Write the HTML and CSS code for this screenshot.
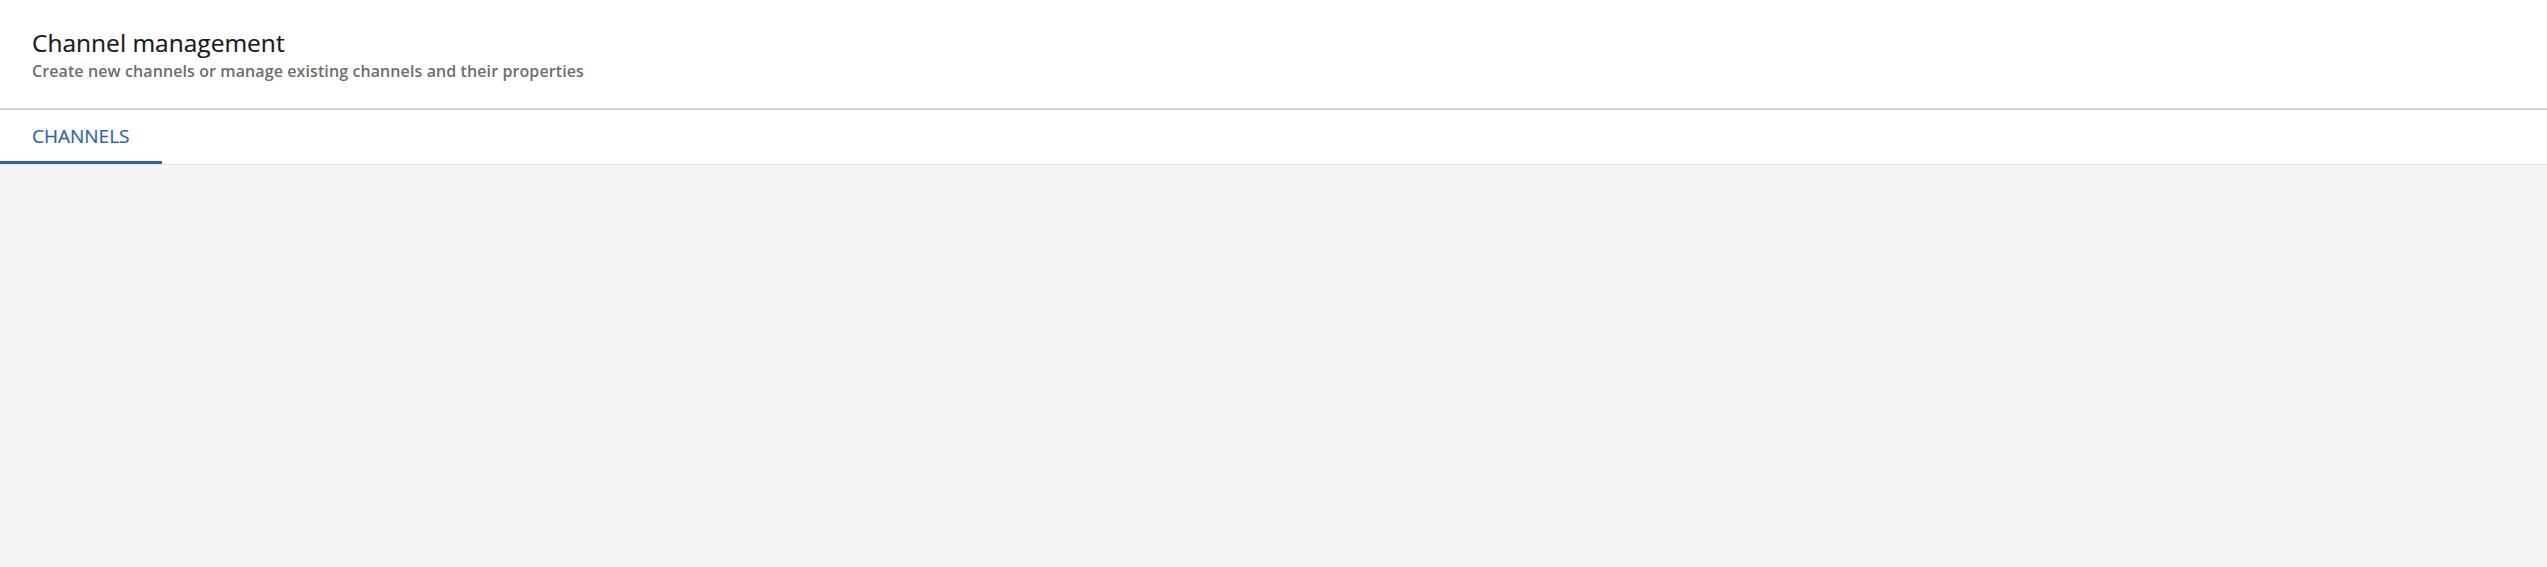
FILE: index.html
```html
<!DOCTYPE html>
<html lang="en">
<head>
    <meta charset="UTF-8">
    <meta name="viewport" content="width=device-width, initial-scale=1.0">
    <title>Channel management</title>
    <link rel="stylesheet" href="styles.css">
</head>
<body>

    <header class="page-header">
        <h1>Channel management</h1>
        <p>Create new channels or manage existing channels and their properties</p>
    </header>

    <nav class="tabs">
        <a href="#" class="tab active">CHANNELS</a>
    </nav>

    <main class="content"></main>

</body>
</html>
```

FILE: styles.css
```css
html, body {
    height: 100%;
}
body {
    font-family: "Open Sans", Arial, sans-serif;
    background-color: #f5f5f5;
    margin: 0;
    padding: 0;
    display: flex;
    flex-direction: column;
}
.page-header {
    background-color: #fff;
    padding: 27px 32px 0;
    height: 81px;
    border-bottom: 2px solid #d4d4d4;
}
.page-header h1 {
    margin: 0;
    font-size: 24.5px;
    font-weight: 400;
    line-height: 32px;
    color: #1a1a1a;
    -webkit-text-stroke: 0.2px #1a1a1a;
}
.page-header p {
    margin: 2px 0 0;
    font-size: 16px;
    font-weight: 600;
    letter-spacing: 0.1px;
    line-height: 20px;
    color: #6e6e6e;
}
.tabs {
    background-color: #fff;
    display: flex;
    height: 54px;
    border-bottom: 1px solid #e6e6e6;
}
.tab {
    display: flex;
    align-items: center;
    padding: 0 32px;
    font-size: 19px;
    color: #2d64a3;
    -webkit-text-stroke: 0.2px #2d64a3;
    text-decoration: none;
    border-bottom: 3px solid transparent;
}
.tab.active {
    border-bottom-color: #2d64a3;
}
.content {
    flex: 1;
}
```
